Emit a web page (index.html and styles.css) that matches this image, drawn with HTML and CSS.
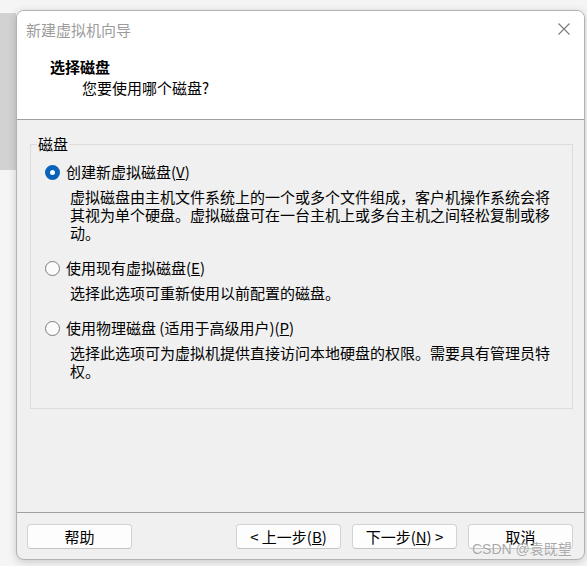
FILE: index.html
```html
<!DOCTYPE html>
<html lang="zh-CN">
<head>
<meta charset="utf-8">
<title>新建虚拟机向导</title>
<link rel="stylesheet" href="styles.css">
</head>
<body>
<div class="backdrop"></div>
<div class="window">
  <div class="header">
    <div class="titlebar">
      <span class="title">新建虚拟机向导</span>
      <svg class="close" width="12" height="12" viewBox="0 0 12 12"><path d="M0.5 0.5 L11.5 11.5 M11.5 0.5 L0.5 11.5" stroke="#7a7a7a" stroke-width="1.1" fill="none"/></svg>
    </div>
    <div class="heading">选择磁盘</div>
    <div class="subheading">您要使用哪个磁盘?</div>
  </div>
  <div class="content">
    <fieldset class="group">
      <legend class="legend">磁盘</legend>
      <div class="option first"><span class="radio checked"></span><span>创建新虚拟磁盘(<u>V</u>)</span></div>
      <p class="desc">虚拟磁盘由主机文件系统上的一个或多个文件组成，客户机操作系统会将其视为单个硬盘。虚拟磁盘可在一台主机上或多台主机之间轻松复制或移动。</p>
      <div class="option"><span class="radio"></span><span>使用现有虚拟磁盘(<u>E</u>)</span></div>
      <p class="desc">选择此选项可重新使用以前配置的磁盘。</p>
      <div class="option"><span class="radio"></span><span>使用物理磁盘 (适用于高级用户)(<u>P</u>)</span></div>
      <p class="desc">选择此选项可为虚拟机提供直接访问本地硬盘的权限。需要具有管理员特权。</p>
    </fieldset>
  </div>
  <div class="footer">
    <button class="btn">帮助</button>
    <span class="spacer"></span>
    <button class="btn">&lt; 上一步(<u>B</u>)</button>
    <button class="btn">下一步(<u>N</u>) &gt;</button>
    <button class="btn">取消</button>
  </div>
</div>
<div class="watermark">CSDN @袁既望</div>
</body>
</html>
```
FILE: styles.css
```css
html, body {
  margin: 0;
  padding: 0;
}
body {
  width: 587px;
  height: 566px;
  overflow: hidden;
  position: relative;
  background: #f5f5f5;
  font-family: "Noto Sans CJK SC", "Noto Sans", sans-serif;
  font-size: 15px;
  color: #000;
}
.backdrop {
  position: absolute;
  left: 0;
  top: 13px;
  width: 16px;
  height: 157px;
  background: #d2d2d2;
}
.window {
  position: relative;
  margin: 10px 0 0 16px;
  width: 569px;
  height: 550px;
  box-sizing: border-box;
  border: 1px solid #b2b2b2;
  border-radius: 8px;
  background: #f0f0f0;
  overflow: hidden;
  display: flex;
  flex-direction: column;
  box-shadow: 0 2px 8px rgba(0, 0, 0, 0.18);
}
.header {
  background: #fff;
  height: 108px;
  flex: none;
  border-bottom: 1px solid #a0a0a0;
}
.titlebar {
  display: flex;
  justify-content: space-between;
  align-items: flex-start;
  padding: 10px 14px 0 9px;
  height: 18px;
}
.title {
  color: #9c9c9c;
  line-height: 18px;
}
.close {
  margin-top: 2px;
  display: block;
}
.heading {
  font-weight: bold;
  line-height: 18px;
  margin: 19px 0 0 33px;
}
.subheading {
  line-height: 18px;
  margin: 3px 0 0 65px;
}
.content {
  flex: 1;
  padding: 15px 11px 0 13px;
}
.group {
  margin: 0;
  padding: 0;
  border: 1px solid #dcdcdc;
  height: 274px;
  box-sizing: border-box;
  min-width: 0;
}
.legend {
  margin-left: 6px;
  padding: 0 1px;
  line-height: 18px;
}
.option {
  display: flex;
  align-items: center;
  gap: 6px;
  padding-left: 14px;
  line-height: 18px;
  margin-top: 17px;
}
.option.first {
  margin-top: 10px;
}
.radio {
  flex: none;
  width: 15px;
  height: 15px;
  box-sizing: border-box;
  border-radius: 50%;
  border: 1px solid #7c7c7c;
  background: #fbfbfb;
}
.radio.checked {
  border: 5px solid #0a62b9;
  background: #fff;
}
.desc {
  margin: 7px 0 0 39px;
  width: 481px;
  line-height: 18px;
}
.footer {
  flex: none;
  border-top: 1px solid #a0a0a0;
  display: flex;
  align-items: flex-start;
  gap: 11px;
  padding: 11px 11px 10px 10px;
}
.spacer {
  flex: 1;
}
.btn {
  width: 105px;
  height: 25px;
  padding: 0;
  margin: 0;
  box-sizing: border-box;
  background: #fdfdfd;
  border: 1px solid #d3d3d3;
  border-bottom-color: #c4c4c4;
  border-radius: 4px;
  font-family: inherit;
  font-size: 15px;
  line-height: 1;
  color: #000;
}
.watermark {
  position: absolute;
  left: 472px;
  top: 540px;
  font-family: "Liberation Sans", "Noto Sans CJK SC", sans-serif;
  font-size: 14px;
  line-height: 18px;
  color: rgba(140, 140, 140, 0.75);
  text-shadow: 0 0 1px rgba(255, 255, 255, 0.9);
  white-space: nowrap;
}
```
